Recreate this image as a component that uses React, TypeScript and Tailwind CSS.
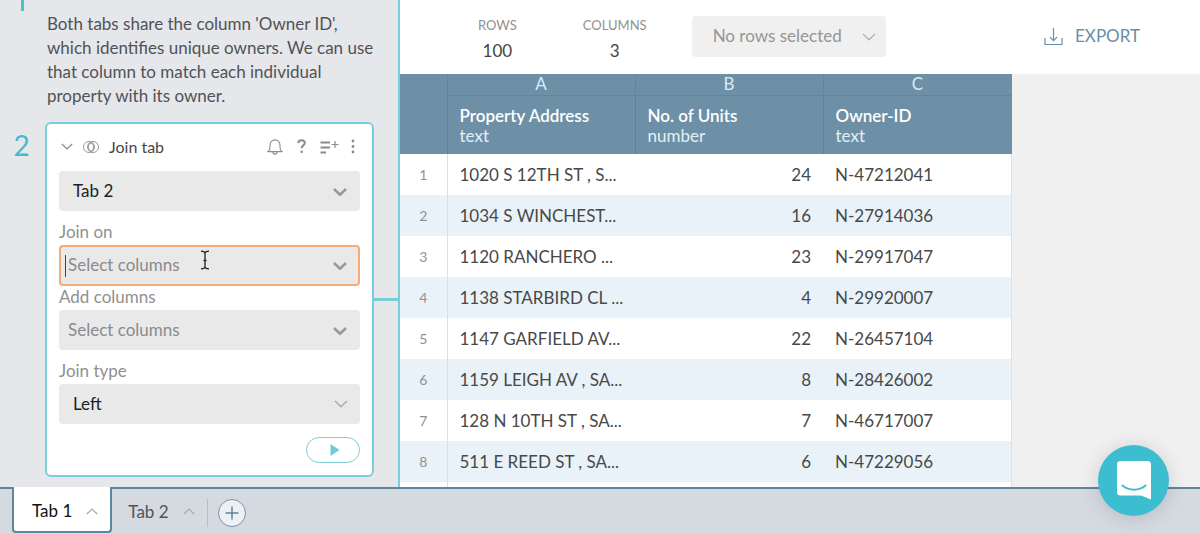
import React, { useState } from "react";

const rows: [string, number, string][] = [
  ["1020 S 12TH ST , S...", 24, "N-47212041"],
  ["1034 S WINCHEST...", 16, "N-27914036"],
  ["1120 RANCHERO ...", 23, "N-29917047"],
  ["1138 STARBIRD CL ...", 4, "N-29920007"],
  ["1147 GARFIELD AV...", 22, "N-26457104"],
  ["1159 LEIGH AV , SA...", 8, "N-28426002"],
  ["128 N 10TH ST , SA...", 7, "N-46717007"],
  ["511 E REED ST , SA...", 6, "N-47229056"],
];

const columns = [
  { letter: "A", name: "Property Address", type: "text" },
  { letter: "B", name: "No. of Units", type: "number" },
  { letter: "C", name: "Owner-ID", type: "text" },
];

function Chevron({ className, bold, up }: { className?: string; bold?: boolean; up?: boolean }) {
  return (
    <svg viewBox="0 0 14 8" fill="none" stroke="currentColor" strokeWidth={bold ? 2.6 : 1.5} className={className} aria-hidden="true">
      <path d={up ? "M1 7L7 1.2L13 7" : "M1 1L7 6.8L13 1"} />
    </svg>
  );
}

function Field({ id, label, children }: { id: string; label: string; children: React.ReactNode }) {
  return (
    <div className="flex flex-col gap-[3px]">
      <label htmlFor={id} className="text-[17px] leading-5 text-[#909090]">
        {label}
      </label>
      <div className="relative flex">{children}</div>
    </div>
  );
}

function PlainSelect({ id, label, value, options }: { id: string; label?: string; value: string; options: string[] }) {
  return (
    <select id={id} aria-label={label} defaultValue={value} className="h-10 w-full appearance-none rounded-sm bg-[#e9e9e9] px-3.5 text-[17px] text-[#222] outline-none">
      {options.map((o) => (
        <option key={o}>{o}</option>
      ))}
    </select>
  );
}

function JoinCard() {
  return (
    <section className="relative rounded-md border-2 border-[#79cfd8] bg-white px-3 pb-3">
      <header className="flex h-[47px] items-center pb-0.5 text-[#8c8c8c]">
        <button aria-label="Collapse step" className="mr-2.5 ml-0.5">
          <Chevron className="h-[7px] w-3" />
        </button>
        <svg viewBox="0 0 16 12" fill="none" stroke="currentColor" strokeWidth="0.9" className="mr-2.5 h-3 w-4" aria-hidden="true">
          <circle cx="6" cy="6" r="5.5" />
          <circle cx="10" cy="6" r="5.5" />
          <ellipse cx="8" cy="6" rx="2.7" ry="4" />
        </svg>
        <h2 className="text-base text-[#484848]">Join tab</h2>
        <div className="ml-auto flex items-center">
          <button aria-label="Notifications" className="mr-3.5">
            <svg viewBox="0 0 16 16" fill="none" stroke="currentColor" strokeWidth="1.1" className="h-4 w-4">
              <path d="M.8 12.6c1.6-.9 2.2-2 2.2-4V6.3C3 3.2 5.1.9 8 .9s5 2.3 5 5.4v2.3c0 2 .6 3.1 2.2 4z" strokeLinejoin="round" />
              <path d="M5.9 12.8a2.1 2.3 0 0 0 4.2 0" />
            </svg>
          </button>
          <button aria-label="Help" className="mr-3.5">
            <svg viewBox="0 0 9 15" fill="none" stroke="currentColor" strokeWidth="2" className="h-[15px] w-[9px]">
              <path d="M1.2 4.1C1.3 2.2 2.6 1.2 4.5 1.2S7.8 2.2 7.8 4c0 2.3-3.2 2.5-3.2 5.2" />
              <path d="M3.5 12.8h2.2" strokeWidth="2.3" />
            </svg>
          </button>
          <button aria-label="Add note" className="mr-3">
            <svg viewBox="0 0 19 14" fill="none" stroke="currentColor" className="h-3.5 w-[19px]">
              <path d="M.5 2.5h9.5M.5 7.5h9.5M.5 12.5h5.5" strokeWidth="1.9" />
              <path d="M11.5 4.5h7M15 1v7" strokeWidth="1.2" />
            </svg>
          </button>
          <button aria-label="More" className="mr-[5px]">
            <svg viewBox="0 0 4 15" fill="currentColor" className="h-[15px] w-1">
              <circle cx="2" cy="2" r="1.4" />
              <circle cx="2" cy="7.5" r="1.4" />
              <circle cx="2" cy="13" r="1.4" />
            </svg>
          </button>
        </div>
      </header>

      <div className="flex flex-col">
        <div className="relative flex">
          <PlainSelect id="tab" label="Tab" value="Tab 2" options={["Tab 2"]} />
          <Chevron bold className="pointer-events-none absolute top-[17px] right-[13px] h-2 w-3.5 text-[#999]" />
        </div>
        <div className="mt-[11px]">
          <Field id="join-on" label="Join on">
            <input id="join-on" placeholder="Select columns" className="h-[41px] w-full rounded-sm border-2 border-[#f3ab7c] bg-[#e9e9e9] px-[7px] pb-0.5 text-[17px] outline-none placeholder:text-[#8b8b8b]" />
            <span className="absolute top-2.5 left-1.5 h-[22px] w-px bg-[#444]" />
            <Chevron bold className="pointer-events-none absolute top-[17px] right-[13px] h-2 w-3.5 text-[#999]" />
            <svg viewBox="0 0 10 20" fill="none" stroke="#222" strokeWidth="1.3" className="pointer-events-none absolute top-[5px] left-[141px] h-5 w-2.5" aria-hidden="true">
              <path d="M1 1.2C3 1.2 5 1.6 5 3.5C5 1.6 7 1.2 9 1.2M5 3.5v13M3.5 10.5h3M1 18.8C3 18.8 5 18.4 5 16.5C5 18.4 7 18.8 9 18.8" />
            </svg>
          </Field>
        </div>
        <div className="mt-px">
          <Field id="add-columns" label="Add columns">
            <input id="add-columns" placeholder="Select columns" className="h-10 w-full rounded-sm bg-[#e9e9e9] px-[9px] pb-0.5 text-[17px] outline-none placeholder:text-[#8b8b8b]" />
            <Chevron bold className="pointer-events-none absolute top-[17px] right-[13px] h-2 w-3.5 text-[#999]" />
          </Field>
        </div>
        <div className="mt-[11px]">
          <Field id="join-type" label="Join type">
            <PlainSelect id="join-type" value="Left" options={["Left", "Inner", "Right"]} />
            <Chevron className="pointer-events-none absolute top-4 right-3 h-2 w-3.5 text-[#aaa]" />
          </Field>
        </div>
        <button aria-label="Run" className="mt-[13px] flex h-[26px] w-[54px] items-center justify-center self-end rounded-full border border-[#79cfd8] pl-1">
          <svg viewBox="0 0 10 12" className="h-3 w-2.5 fill-[#6fcbd5]" aria-hidden="true">
            <path d="M.5 0L9.5 6L.5 12z" />
          </svg>
        </button>
      </div>
      <span className="absolute top-[174px] -right-[26px] h-[3px] w-6 bg-[#79cfd8]" />
    </section>
  );
}

function Stat({ label, value }: { label: string; value: number }) {
  return (
    <div className="flex flex-col items-center">
      <span className="text-[13px] leading-5 text-[#919191]">{label}</span>
      <span className="mt-1.5 text-[17px] leading-5 text-[#444]">{value}</span>
    </div>
  );
}

function DataTable() {
  return (
    <table className="w-[612px] table-fixed border-collapse text-left text-[17px] text-[#484848]">
      <colgroup>
        <col className="w-[47px]" />
        <col className="w-[188px]" />
        <col className="w-[188px]" />
        <col />
      </colgroup>
      <thead className="bg-[#6d90a7] text-white">
        <tr className="h-[21px]">
          <td rowSpan={2} />
          {columns.map((c) => (
            <th key={c.letter} scope="col" className="border-b border-l border-[#64869d] p-0 text-center leading-5 font-normal text-[#d9ebf7]">
              {c.letter}
            </th>
          ))}
        </tr>
        <tr className="h-[59px]">
          {columns.map((c) => (
            <th key={c.name} scope="col" className="border-l border-[#5f8198] px-3 pt-0.5 pb-0 leading-5 font-normal">
              <div className="font-semibold">{c.name}</div>
              <div className="text-[#e3f0f8]">{c.type}</div>
            </th>
          ))}
        </tr>
      </thead>
      <tbody>
        {rows.map(([address, units, owner], i) => (
          <tr key={address} className="h-[41px] bg-white even:bg-[#e9f2f8]">
            <td className="border-r border-[#dcdfe2] p-0 text-center text-sm text-[#919191]">{i + 1}</td>
            <td className="truncate py-0 pr-1 pl-3">{address}</td>
            <td className="px-3 py-0 text-right">{units}</td>
            <td className="border-r border-[#d5e5ef] px-3 py-0">{owner}</td>
          </tr>
        ))}
        <tr className="h-[41px] bg-white">
          <td className="border-r border-[#dcdfe2]" />
          <td />
          <td />
          <td className="border-r border-[#d5e5ef]" />
        </tr>
      </tbody>
    </table>
  );
}

export default function App() {
  const [active, setActive] = useState("Tab 1");
  return (
    <div className="flex h-screen flex-col overflow-hidden bg-[#f0f0f0] font-['Lato','Noto_Sans',sans-serif]">
      <div className="flex min-h-0 flex-1 overflow-hidden">
        <aside className="flex w-[400px] shrink-0 flex-col border-r-2 border-[#79cfd8] bg-[#e5e7eb]">
          <div className="flex">
            <div className="flex w-[45px] shrink-0 justify-center">
              <span className="h-[11px] w-[3px] bg-[#4fbfce]" />
            </div>
            <p className="pt-3 pr-4 pl-0.5 text-[17px] leading-6 text-[#505356]">
              Both tabs share the column 'Owner ID', which identifies unique owners. We can use that column to match each individual property with its owner.
            </p>
          </div>
          <div className="mt-3.5 flex">
            <div className="w-[45px] shrink-0 pt-[5px] pr-0.5 text-center text-[28px] leading-9 text-[#45bccc]">2</div>
            <div className="min-w-0 flex-1 pr-6">
              <JoinCard />
            </div>
          </div>
        </aside>

        <main className="flex min-w-0 flex-1 flex-col overflow-hidden">
          <header className="flex h-[74px] shrink-0 items-center bg-white pr-[60px] pb-0.5 pl-[78px]">
            <div className="flex gap-[66px] pt-1">
              <Stat label="ROWS" value={100} />
              <Stat label="COLUMNS" value={3} />
            </div>
            <div className="relative ml-[45px]">
              <select aria-label="Row selection" className="h-[41px] w-[194px] appearance-none rounded-sm bg-[#f0f0f0] px-[21px] text-[17px] text-[#959595]">
                <option>No rows selected</option>
              </select>
              <Chevron className="pointer-events-none absolute top-[17px] right-2.5 h-2 w-3.5 text-[#b4b4b4]" />
            </div>
            <button className="ml-auto flex items-center gap-3 text-[17px] text-[#6a8ea6]">
              <svg viewBox="0 0 19 19" fill="none" stroke="currentColor" strokeWidth="1.2" className="h-[19px] w-[19px]" aria-hidden="true">
                <path d="M1 11v6.500h17V11M9.500 1v12.500M6 10.200l3.500 3.500L13 10.200" />
              </svg>
              EXPORT
            </button>
          </header>
          <DataTable />
        </main>
      </div>

      <footer className="flex h-[47px] shrink-0 bg-[#d5d9e0]">
        <div className="w-3 border-t-2 border-[#5c87a0]" />
        <nav className="flex">
          <button onClick={() => setActive("Tab 1")} aria-pressed={active === "Tab 1"} className="flex h-[46px] items-center gap-3.5 rounded-b border-x-2 border-b-2 border-[#5c87a0] bg-white px-[18px] pt-1 pr-3 text-[17px] text-[#111]">
            Tab 1
            <Chevron up className="h-[7px] w-3 text-[#aaa]" />
          </button>
          <button onClick={() => setActive("Tab 2")} aria-pressed={active === "Tab 2"} className="flex items-center gap-3.5 border-t-2 border-[#5c87a0] pr-3 pl-4 text-[17px] text-[#505356]">
            Tab 2
            <Chevron up className="h-[7px] w-3 text-[#aaa]" />
          </button>
        </nav>
        <div className="flex flex-1 items-center border-t-2 border-[#5c87a0] pt-0.5">
          <span className="mr-2.5 h-7 w-px bg-[#b9bec5]" />
          <button aria-label="Add tab" className="flex h-7 w-7 items-center justify-center rounded-full border border-[#7196ad] bg-[#eef1f4] text-[#5c87a0]">
            <svg viewBox="0 0 14 14" stroke="currentColor" strokeWidth="1.5" className="h-3.5 w-3.5">
              <path d="M7 .5v13M.5 7h13" />
            </svg>
          </button>
        </div>
      </footer>

      <button aria-label="Open chat" className="fixed right-[31px] bottom-[18px] flex h-[71px] w-[71px] items-center justify-center rounded-full bg-[#3dbdd0] shadow-[0_2px_20px_rgba(0,0,0,0.14)]">
        <svg viewBox="0 0 34 39" className="h-[39px] w-[34px]" aria-hidden="true">
          <path d="M3.5 0h27a3.5 3.5 0 0 1 3.5 3.5V38.5L24 34.5H3.5A3.5 3.5 0 0 1 0 31V3.5A3.5 3.5 0 0 1 3.5 0z" fill="#fff" />
          <path d="M5.5 24.5C12 30 22 30 28.5 24.5" fill="none" stroke="#3dbdd0" strokeWidth="2" strokeLinecap="round" />
        </svg>
      </button>
    </div>
  );
}
